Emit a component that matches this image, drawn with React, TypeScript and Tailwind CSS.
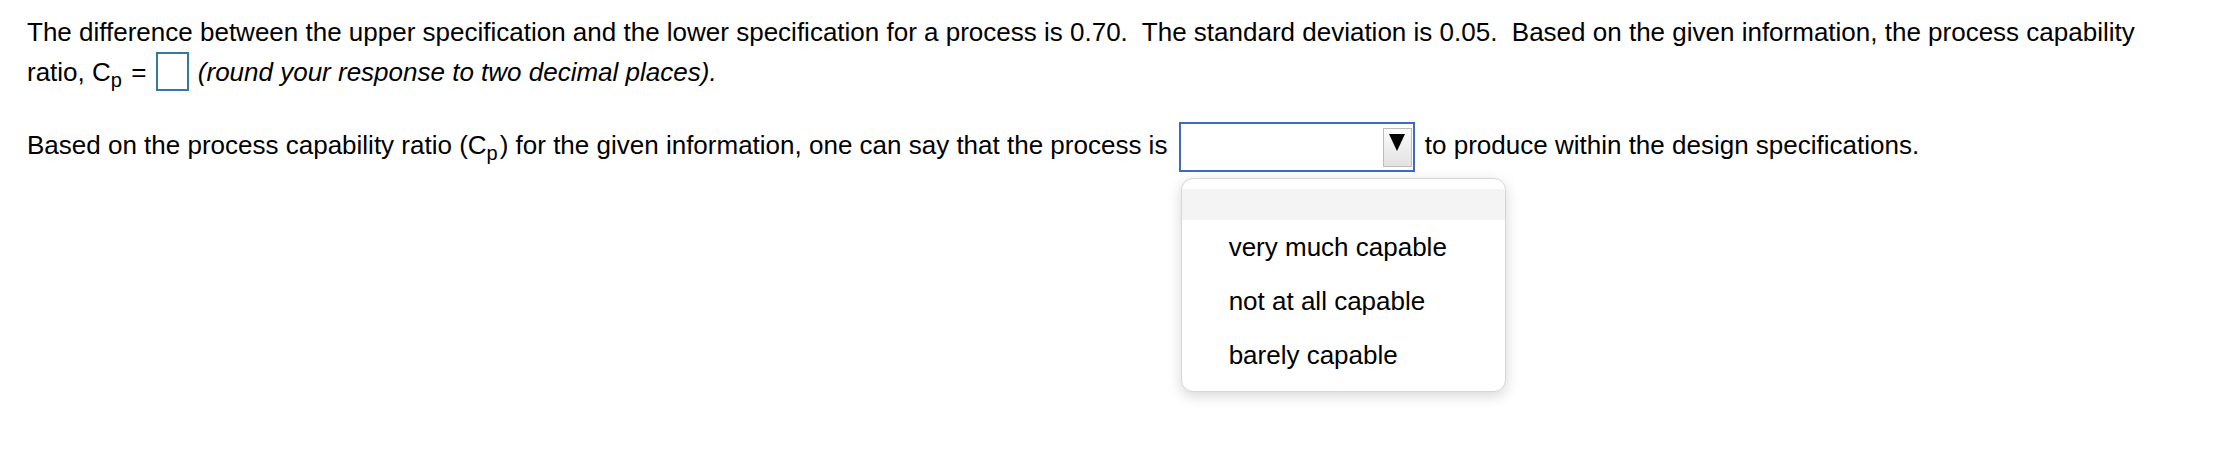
import React from 'react'

const options = ['very much capable', 'not at all capable', 'barely capable']

function Cp() {
    return (
        <>
            C<sub className="text-[20px] -bottom-[0.3em] mr-[2px]">p</sub>
        </>
    )
}

export default function App() {
    return (
        <div className="w-[2214px] h-[454px] bg-white text-black text-[26px] font-['Liberation_Sans',Arial,sans-serif] pl-[27px] pt-[12px] whitespace-pre">
            <p className="leading-[40px]">
                {'The difference between the upper specification and the lower specification for a process is 0.70.  The standard deviation is 0.05.  Based on the given information, the process capability'}
                <br />
                {'ratio, '}<Cp />{' = '}
                <span className="inline-block w-[33px] h-[39px] border-2 border-[#357a9b] align-[-10px] ml-[2px] mr-[2px]"></span>
                {' '}<i>(round your response to two decimal places).</i>
            </p>

            <p className="leading-[40px] mt-[30px]">
                {'Based on the process capability ratio ('}<Cp />{') for the given information, one can say that the process is '}
                <span className="relative inline-block align-middle ml-[4px] mr-[3px]">
                    <span className="flex justify-end w-[236px] h-[50px] border-2 border-[#4169c4] bg-white pt-[4px] pr-[1px]">
                        <span className="flex justify-center pt-[5px] w-[29px] h-[39px] border border-[#bdbdbd] bg-gradient-to-b from-[#fbfbfb] to-[#e2e2e2]">
                            <svg width="16" height="17" viewBox="0 0 16 17">
                                <polygon points="0,0 16,0 8,17" fill="#000" />
                            </svg>
                        </span>
                    </span>
                    <div className="absolute left-[2px] top-[56px] w-[325px] h-[214px] rounded-[12px] border border-[#d6d6d6] bg-white shadow-[0_4px_14px_rgba(0,0,0,0.16)] pt-[10px] overflow-hidden">
                        <div className="h-[31px] bg-[#f4f4f4]"></div>
                        {options.map((opt) => (
                            <div key={opt} className="leading-[54px] pl-[47px]">{opt}</div>
                        ))}
                    </div>
                </span>
                {' to produce within the design specifications.'}
            </p>
        </div>
    )
}
